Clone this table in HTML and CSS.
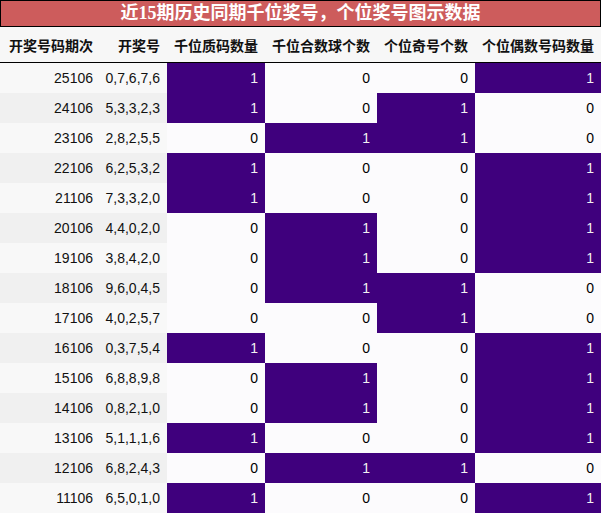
FILE: index.html
```html
<!DOCTYPE html>
<html lang="zh">
<head>
<meta charset="utf-8">
<link rel="stylesheet" href="styles.css">
</head>
<body>
<div class="wrap">
  <div class="title">近15期历史同期千位奖号，个位奖号图示数据</div>
  <table class="grid">
    <colgroup>
      <col class="c1"><col class="c2"><col class="c3"><col class="c4"><col class="c5"><col class="c6">
    </colgroup>
    <thead>
      <tr>
        <th>开奖号码期次</th><th>开奖号</th><th>千位质码数量</th><th>千位合数球个数</th><th>个位奇号个数</th><th>个位偶数号码数量</th>
      </tr>
    </thead>
    <tbody>
      <tr><td class="k">25106</td><td class="k">0,7,6,7,6</td><td class="on">1</td><td>0</td><td>0</td><td class="on">1</td></tr>
      <tr><td class="k">24106</td><td class="k">5,3,3,2,3</td><td class="on">1</td><td>0</td><td class="on">1</td><td>0</td></tr>
      <tr><td class="k">23106</td><td class="k">2,8,2,5,5</td><td>0</td><td class="on">1</td><td class="on">1</td><td>0</td></tr>
      <tr><td class="k">22106</td><td class="k">6,2,5,3,2</td><td class="on">1</td><td>0</td><td>0</td><td class="on">1</td></tr>
      <tr><td class="k">21106</td><td class="k">7,3,3,2,0</td><td class="on">1</td><td>0</td><td>0</td><td class="on">1</td></tr>
      <tr><td class="k">20106</td><td class="k">4,4,0,2,0</td><td>0</td><td class="on">1</td><td>0</td><td class="on">1</td></tr>
      <tr><td class="k">19106</td><td class="k">3,8,4,2,0</td><td>0</td><td class="on">1</td><td>0</td><td class="on">1</td></tr>
      <tr><td class="k">18106</td><td class="k">9,6,0,4,5</td><td>0</td><td class="on">1</td><td class="on">1</td><td>0</td></tr>
      <tr><td class="k">17106</td><td class="k">4,0,2,5,7</td><td>0</td><td>0</td><td class="on">1</td><td>0</td></tr>
      <tr><td class="k">16106</td><td class="k">0,3,7,5,4</td><td class="on">1</td><td>0</td><td>0</td><td class="on">1</td></tr>
      <tr><td class="k">15106</td><td class="k">6,8,8,9,8</td><td>0</td><td class="on">1</td><td>0</td><td class="on">1</td></tr>
      <tr><td class="k">14106</td><td class="k">0,8,2,1,0</td><td>0</td><td class="on">1</td><td>0</td><td class="on">1</td></tr>
      <tr><td class="k">13106</td><td class="k">5,1,1,1,6</td><td class="on">1</td><td>0</td><td>0</td><td class="on">1</td></tr>
      <tr><td class="k">12106</td><td class="k">6,8,2,4,3</td><td>0</td><td class="on">1</td><td class="on">1</td><td>0</td></tr>
      <tr><td class="k">11106</td><td class="k">6,5,0,1,0</td><td class="on">1</td><td>0</td><td>0</td><td class="on">1</td></tr>
    </tbody>
  </table>
</div>
</body>
</html>
```

FILE: styles.css
```css
html, body {
  margin: 0;
  padding: 0;
  background: #ffffff;
}
.wrap {
  width: 601px;
}
.title {
  box-sizing: border-box;
  height: 27px;
  border: 1px solid #000000;
  background: #cd5c5c;
  color: #ffffff;
  font-family: "Liberation Serif", "Noto Sans CJK SC", serif;
  font-weight: bold;
  font-size: 18px;
  line-height: 24px;
  text-align: center;
}
.grid {
  width: 601px;
  border-collapse: collapse;
  border-spacing: 0;
  table-layout: fixed;
  font-family: "Liberation Sans", "Noto Sans CJK SC", sans-serif;
  font-size: 14px;
  color: #000000;
}
.c1 { width: 100px; }
.c2 { width: 67px; }
.c3 { width: 98px; }
.c4 { width: 112px; }
.c5 { width: 98px; }
.c6 { width: 126px; }
.grid th {
  height: 35px;
  padding: 0 7px 0 0;
  background: #f7f7f7;
  font-family: "Noto Sans CJK SC", sans-serif;
  font-weight: bold;
  font-size: 14px;
  color: #111111;
  text-align: right;
  white-space: nowrap;
  border-bottom: 1px solid #000000;
}
.grid td {
  height: 30px;
  padding: 0 7px 0 0;
  text-align: right;
  background: #fcfbfd;
  white-space: nowrap;
}
.grid tbody tr:nth-child(odd) td.k {
  background: #f8f8f8;
}
.grid tbody tr:nth-child(even) td.k {
  background: #f0f0f0;
}
.grid td.k {
  color: #111111;
}
.grid td.on {
  background: #3f007d;
  color: #f1f1f1;
}
```
